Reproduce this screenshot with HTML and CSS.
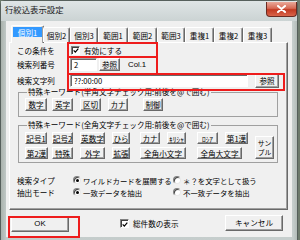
FILE: index.html
```html
<!DOCTYPE html>
<html lang="ja">
<head>
<meta charset="utf-8">
<title>行絞込表示設定</title>
<link rel="stylesheet" href="styles.css">
</head>
<body>
<div class="window">
  <div class="titlebar">
    <span class="title">行絞込表示設定</span>
    <div class="close"><svg width="11" height="8" viewBox="0 0 11 8"><path d="M2 1 L9 7 M9 1 L2 7" stroke="#fff" stroke-width="2" stroke-linecap="round"/></svg></div>
  </div>
  <div class="client">
    <div class="tabs">
      <div class="tab active"><span class="focus">個別1</span></div>
      <div class="tab w27">個別2</div>
      <div class="tab w28">個別3</div>
      <div class="tab w30">範囲1</div>
      <div class="tab w29">範囲2</div>
      <div class="tab w28">範囲3</div>
      <div class="tab w29">重複1</div>
      <div class="tab w29">重複2</div>
      <div class="tab w29">重複3</div>
    </div>
    <div class="panel">
      <div class="row row-enable">
        <span class="label">この条件を</span>
        <span class="check"><span class="cbox"><svg width="7" height="7" viewBox="0 0 7 7"><path d="M0.8 3.4 L2.7 5.4 L6.2 1.2" fill="none" stroke="#000" stroke-width="1.4"/></svg></span>有効にする</span>
      </div>
      <div class="row row-col">
        <span class="label">検索列番号</span>
        <span class="input in-col">2</span>
        <span class="btn b-ref1">参照</span>
        <span class="colname">Col.1</span>
      </div>
      <div class="row row-str">
        <span class="label">検索文字列</span>
        <span class="input in-str">??:00:00</span>
        <span class="btn b-ref2">参照</span>
      </div>
      <div class="group g1">
        <span class="legend">特殊キーワード(半角文字チェック用:前後を@で囲む)</span>
        <div class="keys1">
          <span class="btn k-num">数字</span>
          <span class="btn k-alpha">英字</span>
          <span class="btn k-sep">区切</span>
          <span class="btn k-kana">カナ</span>
          <span class="btn k-ctrl">制御</span>
        </div>
      </div>
      <div class="group g2">
        <span class="legend">特殊キーワード(全角文字チェック用:前後を@で囲む)</span>
        <div class="keys2">
          <span class="btn c1 kw22">記号1</span>
          <span class="btn c2 kw21">記号2</span>
          <span class="btn c3 kw25">英数字</span>
          <span class="btn c4 kw18">ひら</span>
          <span class="btn c5 kw20">カナ</span>
          <span class="btn c6 kw19 narrow">ｷﾘｼｬ</span>
          <span class="btn c7 kw21 narrow">ﾛｼｱ</span>
          <span class="btn c8 kw23">第1漢</span>
          <span class="btn sample">サン<br>プル</span>
          <span class="btn c1 kw23 r2">第2漢</span>
          <span class="btn c2 kw21 r2">特殊</span>
          <span class="btn c3 kw25 r2">外字</span>
          <span class="btn c4 kw18 r2">拡張</span>
          <span class="btn c56 r2">全角小文字</span>
          <span class="btn c78 r2">全角大文字</span>
        </div>
      </div>
      <div class="options">
        <span class="label">検索タイプ</span>
        <span class="radio on"></span>
        <span class="opt">ワイルドカードを展開する</span>
        <span class="radio"></span>
        <span class="opt">＊？を文字として扱う</span>
        <span class="label">抽出モード</span>
        <span class="radio on"></span>
        <span class="opt">一致データを抽出</span>
        <span class="radio"></span>
        <span class="opt">不一致データを抽出</span>
      </div>
    </div>
    <div class="footer">
      <span class="btn ok">OK</span>
      <span class="check total"><span class="cbox"><svg width="7" height="7" viewBox="0 0 7 7"><path d="M0.8 3.4 L2.7 5.4 L6.2 1.2" fill="none" stroke="#000" stroke-width="1.4"/></svg></span>総件数の表示</span>
      <span class="btn cancel">キャンセル</span>
    </div>
  </div>
  <div class="mark m1"></div>
  <div class="mark m2"></div>
  <div class="mark m3"></div>
  <div class="mark m4"></div>
</div>
</body>
</html>
```

FILE: styles.css
```css
* { box-sizing: border-box; }
html, body { margin: 0; padding: 0; }
body {
  width: 300px;
  height: 240px;
  overflow: hidden;
  background: #6d7a6c;
  font-family: "Noto Sans CJK JP", "Noto Sans", sans-serif;
  font-size: 7.6px;
  color: #000;
}
.window {
  position: relative;
  width: 298px;
  height: 244px;
  border: 1px solid #56605c;
  border-radius: 5px 5px 0 0;
  background: linear-gradient(90deg, #aab3ad 0, #c4cccb 6px, #c6cecd 292px, #b3bcb8 100%);
  display: flex;
  flex-direction: column;
}
.titlebar {
  height: 20px;
  display: flex;
  align-items: flex-start;
  padding-left: 4px;
  background: linear-gradient(180deg, #dfe5e6 0, #cbd3d3 100%);
}
.title {
  margin-top: 4px;
  line-height: 9px;
  font-size: 8.4px;
  color: #1a1a1a;
}
.close {
  margin-left: auto;
  margin-top: 1px;
  width: 31px;
  height: 15px;
  border: 1px solid #6a2b22;
  border-top: none;
  border-radius: 0 0 4px 4px;
  background: linear-gradient(180deg, #e9a99a 0, #d66a55 45%, #c23a22 55%, #d9644a 100%);
  display: flex;
  align-items: center;
  justify-content: center;
}
.client {
  margin-left: 5px;
  width: 286px;
  height: 216px;
  background: #f0f0f0;
  display: flex;
  flex-direction: column;
}
.tabs {
  height: 21px;
  display: flex;
  align-items: flex-end;
  padding-left: 5px;
  position: relative;
  z-index: 1;
}
.tab {
  height: 15px;
  display: flex;
  align-items: center;
  justify-content: center;
  border: 1px solid;
  border-color: #fff #696969 transparent #fff;
  border-bottom: none;
  border-radius: 2px 2px 0 0;
  box-shadow: inset -1px 0 #a0a0a0;
  background: #f0f0f0;
  line-height: 9px;
}
.tab.active {
  height: 18px;
  width: 33px;
  margin-bottom: -1px;
  margin-right: -1px;
  align-items: flex-start;
  padding-top: 1px;
}
.focus {
  background: #3399ff;
  color: #fff;
  width: 29px;
  height: 10px;
  display: flex;
  align-items: center;
  justify-content: center;
}
.w27 { width: 27px; }
.w28 { width: 28px; }
.w29 { width: 29px; }
.w30 { width: 30px; }
.panel {
  margin-left: 3px;
  width: 279px;
  height: 168px;
  border: 1px solid;
  border-color: #fff #696969 #696969 #fff;
  box-shadow: inset -1px -1px #a0a0a0;
  padding: 0 0 0 7px;
  display: flex;
  flex-direction: column;
}
.row {
  display: flex;
  align-items: center;
}
.label {
  width: 53px;
  flex: none;
  line-height: 9px;
  white-space: nowrap;
}
.row-enable { height: 14px; }
.row-col { height: 15px; }
.row-str { height: 17px; }
.check {
  display: flex;
  align-items: center;
  line-height: 9px;
  white-space: nowrap;
}
.row-enable .check { margin-left: 1px; }
.cbox {
  width: 9px;
  height: 9px;
  margin-right: 4px;
  background: #fff;
  border: 1px solid;
  border-color: #808080 #fff #fff #808080;
  box-shadow: inset 1px 1px #404040;
  display: flex;
  align-items: center;
  justify-content: center;
  padding: 1px 0 0 1px;
}
.input {
  height: 13px;
  background: #fff;
  border: 1px solid;
  border-color: #a0a0a0 #fff #fff #a0a0a0;
  box-shadow: inset 1px 1px #696969;
  padding-left: 3px;
  display: flex;
  align-items: center;
  line-height: 9px;
}
.in-col { width: 27px; }
.in-str { width: 178px; }
.btn {
  background: #f0f0f0;
  border: 1px solid;
  border-color: #fff #696969 #696969 #fff;
  box-shadow: inset -1px -1px #a0a0a0;
  display: flex;
  align-items: center;
  justify-content: center;
  line-height: 9px;
  white-space: nowrap;
}
.b-ref1 { width: 21px; height: 13px; margin-left: 2px; }
.b-ref2 { width: 24px; height: 14px; margin-left: 7px; }
.colname { margin-left: 8px; line-height: 9px; font-family: "Liberation Sans", sans-serif; font-size: 7.8px; }
.group {
  margin-left: 1px;
  width: 260px;
  border: 1px solid #a0a0a0;
  display: flex;
  flex-direction: column;
}
.legend {
  display: block;
  width: max-content;
  margin: -6px 0 0 2px;
  padding: 0 1px;
  line-height: 10px;
  background: #f0f0f0;
  white-space: nowrap;
}
.g1 { margin-top: 3px; padding: 0 0 5px 6px; }
.keys1 {
  margin-top: 1px;
  display: flex;
  height: 13px;
}
.keys1 .btn { height: 13px; }
.k-num { width: 22px; }
.k-alpha { width: 21px; margin-left: 5px; }
.k-sep { width: 21px; margin-left: 7px; }
.k-kana { width: 20px; margin-left: 7px; }
.k-ctrl { width: 20px; margin-left: 15px; }
.g2 { margin-top: 8px; padding: 0 0 3px 6px; }
.keys2 {
  margin-top: 2px;
  display: grid;
  grid-template-columns: 27px 28px 32px 28px 27px 30px 28px 30px 20px;
  grid-template-rows: 12px 12px;
  row-gap: 3px;
}
.keys2 .btn { height: 12px; justify-self: start; }
.c1 { grid-column: 1; grid-row: 1; }
.c2 { grid-column: 2; grid-row: 1; }
.c3 { grid-column: 3; grid-row: 1; }
.c4 { grid-column: 4; grid-row: 1; }
.c5 { grid-column: 5; grid-row: 1; }
.c6 { grid-column: 6; grid-row: 1; }
.c7 { grid-column: 7; grid-row: 1; }
.c8 { grid-column: 8; grid-row: 1; }
.keys2 .r2 { grid-row: 2; }
.c56 { grid-column: 5 / span 2; width: 46px; }
.c78 { grid-column: 7 / span 2; width: 45px; }
.kw18 { width: 18px; }
.kw19 { width: 19px; }
.kw20 { width: 20px; }
.kw21 { width: 21px; }
.kw22 { width: 22px; }
.kw23 { width: 23px; }
.kw25 { width: 25px; }
.narrow { font-size: 7.4px; }
.keys2 .sample {
  grid-column: 9;
  grid-row: 1 / span 2;
  width: 19px;
  height: 23px;
  align-self: end;
  font-size: 6.8px;
  line-height: 9px;
  text-align: center;
}
.options {
  margin-top: 11px;
  display: grid;
  grid-template-columns: 56px 10px 90px 10px auto;
  grid-template-rows: 12px 12px;
  align-items: center;
  line-height: 9px;
  white-space: nowrap;
}
.options .label { width: auto; }
.opt { font-size: 7.4px; }
.radio {
  width: 8px;
  height: 8px;
  border-radius: 50%;
  background: #fff;
  border: 1px solid;
  border-color: #808080 #e8e8e8 #e8e8e8 #808080;
  box-shadow: inset 1px 1px #404040;
  display: flex;
  align-items: center;
  justify-content: center;
}
.radio.on::after {
  content: "";
  width: 3px;
  height: 3px;
  border-radius: 50%;
  background: #000;
}
.footer {
  display: flex;
  align-items: center;
  padding-left: 5px;
  padding-right: 9px;
  height: 27px;
}
.ok {
  width: 58px;
  height: 16px;
  font-family: "Liberation Sans", sans-serif;
  font-size: 7.8px;
}
.total { margin-left: 51px; }
.cancel {
  margin-left: auto;
  width: 58px;
  height: 16px;
  margin-top: -2px;
}
.mark {
  position: absolute;
  border: 2px solid #ee1c1c;
  pointer-events: none;
}
.m1 { left: 66px; top: 41px; width: 91px; height: 16px; }
.m2 { left: 66px; top: 55px; width: 91px; height: 19px; }
.m3 { left: 66px; top: 72px; width: 218px; height: 18px; }
.m4 { left: 7px; top: 215px; width: 72px; height: 22px; }
```
